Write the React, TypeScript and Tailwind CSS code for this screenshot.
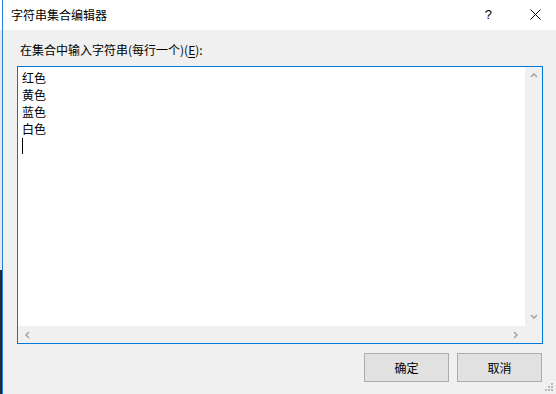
import React from "react";

const font = { fontFamily: '"Microsoft YaHei UI", "Noto Sans CJK SC", "Noto Sans", sans-serif' };

function Arrow({ dir }: { dir: "up" | "down" | "left" | "right" }) {
  const paths: Record<string, string> = {
    up: "M1 5 L4 2 L7 5",
    down: "M1 2 L4 5 L7 2",
    left: "M5 1 L2 4 L5 7",
    right: "M2 1 L5 4 L2 7",
  };
  return (
    <svg width="8" height="8" viewBox="0 0 8 8">
      <path d={paths[dir]} fill="none" stroke="#a6a6a6" strokeWidth="1.6" />
    </svg>
  );
}

export default function App() {
  const lines = ["红色", "黄色", "蓝色", "白色"];
  return (
    <div className="flex h-[394px] w-[556px] overflow-hidden text-[12px] text-black" style={font}>
      <div className="flex w-[2px] flex-col">
        <div className="h-[30px] bg-white" />
        <div className="h-[240px] bg-[#e8e8e8]" />
        <div className="flex-1 bg-[#1c2b3b]" />
      </div>
      <div className="w-px bg-[#2a7fd5]" />
      <div className="flex flex-1 flex-col bg-[#f0f0f0]">
        {/* Title bar */}
        <div className="flex h-[30px] items-center bg-white">
          <span className="pl-[8px] leading-none">字符串集合编辑器</span>
          <div className="flex-1" />
          <span className="mr-[38px] text-[13px] leading-none" style={{ fontFamily: '"Liberation Sans", sans-serif' }}>?</span>
          <svg className="mr-[15px]" width="11" height="11" viewBox="0 0 11 11">
            <path d="M0.5 0.5 L10.5 10.5 M10.5 0.5 L0.5 10.5" stroke="#000" strokeWidth="1" />
          </svg>
        </div>
        {/* Label */}
        <div className="pl-[17px] pt-[11px] leading-[17px]">
          在集合中输入字符串(每行一个)(<span className="underline underline-offset-2">E</span>):
        </div>
        {/* Textbox */}
        <div className="ml-[14px] mr-[13px] mt-[8px] flex h-[280px] flex-col border border-[#0078d7] bg-white">
          <div className="flex flex-1">
            <div className="flex-1 pl-[4px] pt-[2px] leading-[17px]">
              {lines.map((l) => (
                <div key={l}>{l}</div>
              ))}
              <div className="mt-[1px] h-[16px] w-px bg-black" />
            </div>
            <div className="flex w-[17px] flex-col items-center justify-between bg-[#f0f0f0] py-[5px]">
              <Arrow dir="up" />
              <Arrow dir="down" />
            </div>
          </div>
          <div className="flex h-[17px] items-center bg-[#f0f0f0]">
            <div className="flex flex-1 items-center justify-between pl-[6px] pr-[5px]">
              <Arrow dir="left" />
              <Arrow dir="right" />
            </div>
            <div className="w-[17px]" />
          </div>
        </div>
        {/* Buttons */}
        <div className="mr-[14px] mt-[9px] flex justify-end gap-[8px]">
          <button className="flex h-[29px] w-[85px] items-center justify-center border border-[#adadad] bg-[#e1e1e1] leading-none">
            确定
          </button>
          <button className="flex h-[29px] w-[85px] items-center justify-center border border-[#adadad] bg-[#e1e1e1] leading-none">
            取消
          </button>
        </div>
        <div className="flex flex-1 items-end justify-end pb-[2px] pr-[2px]">
          <svg width="10" height="10" viewBox="0 0 10 10">
            <rect x="7" y="1" width="2" height="2" fill="#b8b8b8" />
            <rect x="4" y="4" width="2" height="2" fill="#b8b8b8" />
            <rect x="7" y="4" width="2" height="2" fill="#b8b8b8" />
            <rect x="1" y="7" width="2" height="2" fill="#b8b8b8" />
            <rect x="4" y="7" width="2" height="2" fill="#b8b8b8" />
            <rect x="7" y="7" width="2" height="2" fill="#b8b8b8" />
          </svg>
        </div>
      </div>
    </div>
  );
}
